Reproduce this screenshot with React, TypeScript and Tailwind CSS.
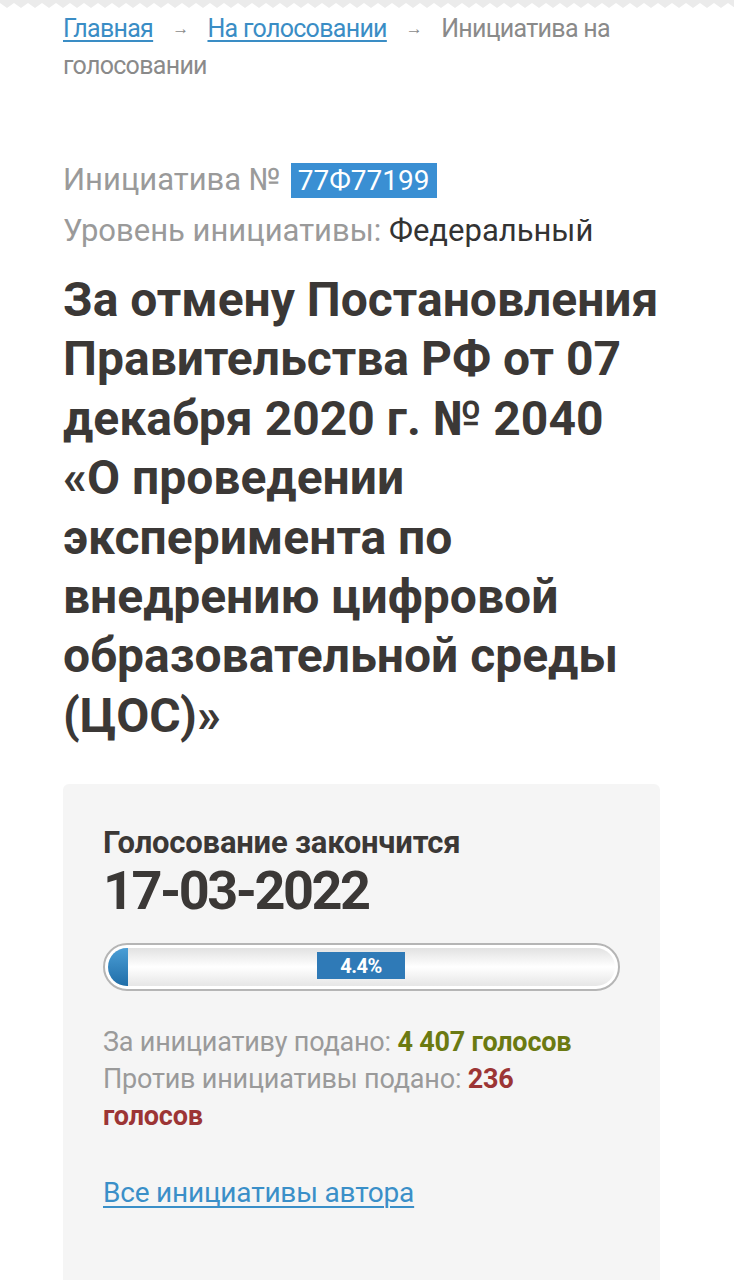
import React from "react";

const font = { fontFamily: "Roboto, 'Noto Sans', sans-serif" };

function Scallop() {
  return (
    <svg width="734" height="12" className="block" aria-hidden>
      <defs>
        <pattern id="sc" width="14" height="12" patternUnits="userSpaceOnUse">
          <rect width="14" height="5" fill="#ebebeb" />
          <path d="M0 5 L7 10 L14 5 Z" fill="#ebebeb" />
        </pattern>
      </defs>
      <rect width="734" height="12" fill="url(#sc)" />
    </svg>
  );
}

function Arrow() {
  return (
    <span className="mx-[19px] inline-block align-[3px] text-[17px] leading-[17px]">→</span>
  );
}

export default function App() {
  return (
    <div className="min-h-[1280px] w-[734px] overflow-hidden bg-white" style={font}>
      <div className="-mt-[2px]">
        <Scallop />
      </div>
      <div className="px-[63px]">
        <div className="mt-0 text-[25px] leading-[37px] tracking-[-0.7px] text-[#8a8a8a]">
          <a className="text-[#3a8dc5] underline decoration-[1.5px] underline-offset-[3px]">Главная</a>
          <Arrow />
          <a className="text-[#3a8dc5] underline decoration-[1.5px] underline-offset-[3px]">На голосовании</a>
          <Arrow />
          <span>Инициатива на голосовании</span>
        </div>

        <div className="mt-[76px] flex h-[40px] items-center text-[31px] leading-[40px] text-[#9a9a9a]">
          <span>Инициатива №</span>
          <span className="ml-[10px] bg-[#3a8fd3] px-[7px] text-[28px] leading-[35px] text-white">77Ф77199</span>
        </div>
        <div className="mt-[11px] text-[31px] leading-[40px] text-[#9a9a9a]">
          Уровень инициативы: <span className="text-[#333]">Федеральный</span>
        </div>

        <h1 className="mt-[19px] text-[48px] font-bold leading-[59.4px] text-[#3b3836]">
          За отмену Постановления Правительства РФ от 07 декабря 2020 г. № 2040 «О проведении
          эксперимента по внедрению цифровой образовательной среды (ЦОС)»
        </h1>

        <div className="mt-[39px] min-h-[520px] w-[597px] rounded-[6px] bg-[#f5f5f5] px-[40px] pt-[40px]">
          <div className="text-[31px] font-bold leading-[38px] tracking-[-0.2px] text-[#3b3836]">
            Голосование закончится
          </div>
          <div className="text-[54px] font-bold leading-[58px] tracking-[-2.5px] text-[#3b3836]">
            17-03-2022
          </div>

          <div className="relative mt-[23px] h-[48px] w-[517px] rounded-full border-[2px] border-[#b5b5b5] bg-white p-[3px]">
            <div className="relative h-full w-full overflow-hidden rounded-full bg-gradient-to-b from-[#e2e2e2] via-white to-[#e6e6e6]">
              <div className="absolute left-0 top-0 h-full w-[20px] bg-gradient-to-b from-[#4a9ed6] to-[#1f6ea8]" />
            </div>
            <div className="absolute left-[212px] top-[7px] flex h-[27px] w-[88px] items-center justify-center bg-[#2f7ab7] text-[20px] font-bold tracking-[-0.5px] text-white">
              4.4%
            </div>
          </div>

          <div className="mt-[33px] w-[505px] text-[27px] leading-[37px] tracking-[-0.2px] text-[#9a9a9a]">
            <div>
              За инициативу подано: <span className="font-bold text-[#6b7a12]">4 407 голосов</span>
            </div>
            <div>
              Против инициативы подано: <span className="font-bold text-[#9c3535]">236 голосов</span>
            </div>
          </div>

          <a className="mt-[40px] block text-[28px] leading-[36px] tracking-[-0.2px] text-[#3a8fc8] underline decoration-[1.5px] underline-offset-[4px]">
            Все инициативы автора
          </a>
        </div>
      </div>
    </div>
  );
}
